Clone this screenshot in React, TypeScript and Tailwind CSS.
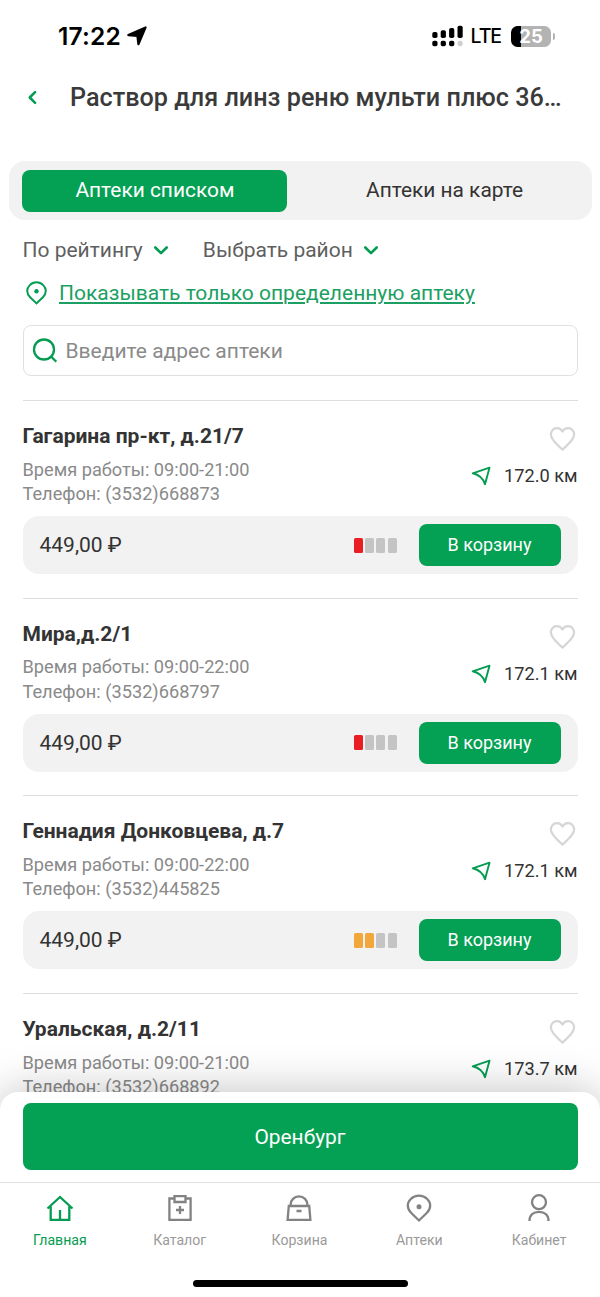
import type { ReactNode } from "react";

type Pharmacy = {
  address: string;
  hours: string;
  phone: string;
  distance: string;
  price: string;
  stock: string[];
};

const RED = "bg-[#ea1d25]";
const ORANGE = "bg-[#f2a73d]";
const EMPTY = "bg-[#c4c4c4]";

const pharmacies: Pharmacy[] = [
  { address: "Гагарина пр-кт, д.21/7", hours: "09:00-21:00", phone: "(3532)668873", distance: "172.0 км", price: "449,00 ₽", stock: [RED, EMPTY, EMPTY, EMPTY] },
  { address: "Мира,д.2/1", hours: "09:00-22:00", phone: "(3532)668797", distance: "172.1 км", price: "449,00 ₽", stock: [RED, EMPTY, EMPTY, EMPTY] },
  { address: "Геннадия Донковцева, д.7", hours: "09:00-22:00", phone: "(3532)445825", distance: "172.1 км", price: "449,00 ₽", stock: [ORANGE, ORANGE, EMPTY, EMPTY] },
  { address: "Уральская, д.2/11", hours: "09:00-21:00", phone: "(3532)668892", distance: "173.7 км", price: "449,00 ₽", stock: [RED, EMPTY, EMPTY, EMPTY] },
];

function StatusBar() {
  return (
    <div className="flex h-[72px] shrink-0 items-center pl-[58px] pr-[45px]">
      <span className="font-[Inter] text-[24.5px] font-semibold leading-none tracking-[0.2px] text-black">17:22</span>
      <svg className="ml-[6px]" width="20" height="20" viewBox="0 0 20 20">
        <path d="M18.6 1.4 11.4 18.2 10.4 9.9 1.4 9.1Z" fill="#000" stroke="#000" strokeWidth="2.2" strokeLinejoin="round" />
      </svg>
      <svg className="ml-auto" width="31" height="22" viewBox="0 0 31 22">
        <rect x="0.3" y="7" width="5.2" height="6" rx="1.8" />
        <rect x="8.7" y="5.3" width="5.2" height="7.7" rx="1.8" />
        <rect x="17.1" y="3" width="5.2" height="10" rx="1.8" />
        <rect x="25.5" y="0.7" width="5.2" height="12.3" rx="1.8" />
        <rect x="0.3" y="15.7" width="5.2" height="5.6" rx="1.8" />
        <rect x="8.7" y="15.7" width="5.2" height="5.6" rx="1.8" />
        <rect x="17.1" y="15.7" width="5.2" height="5.6" rx="1.8" />
        <rect x="25.5" y="15.7" width="5.2" height="5.6" rx="2.4" fill="#d0d0d0" />
      </svg>
      <span className="ml-[8px] mt-[2px] font-[Inter] text-[19.5px] font-medium leading-none tracking-[-1.1px] text-black">LTE</span>
      <div className="ml-[10px] flex h-[21px] w-[40px] items-center justify-center rounded-[6.5px] bg-linear-to-r from-black from-25% to-[#b3b3b3] to-25%">
        <span className="font-[Inter] text-[18.5px] font-bold leading-none text-white">25</span>
      </div>
      <div className="ml-[1.5px] h-[7px] w-[2.5px] rounded-r-full bg-[#b3b3b3]" />
    </div>
  );
}

function Chevron() {
  return (
    <svg width="16" height="12" viewBox="0 0 16 12" fill="none" stroke="#049c51" strokeWidth="2.6" strokeLinecap="round" strokeLinejoin="round">
      <path d="M2.3 3.5 8 9.2 13.7 3.5" />
    </svg>
  );
}

function PharmacyCard({ item }: { item: Pharmacy }) {
  return (
    <article className="flex h-[197.6px] shrink-0 flex-col border-t-[1.5px] border-[#dedede] pt-[22px]">
      <div className="flex h-[93.2px] justify-between">
        <div>
          <h2 className="h-[34.8px] text-[21px] font-bold leading-[26px] text-[#333]">{item.address}</h2>
          <p className="text-[18.2px] leading-[24.4px] text-[#8a8a8a]">Время работы: {item.hours}</p>
          <p className="text-[18.2px] leading-[24.4px] text-[#8a8a8a]">Телефон: {item.phone}</p>
        </div>
        <div className="flex flex-col items-end">
          <svg className="mt-[3px] mr-[2px]" width="27" height="26" viewBox="0 0 28 26" fill="none" stroke="#d6d6d6" strokeWidth="2.3" strokeLinejoin="round">
            <path d="M14 5.2C11.4.6 5.4.7 3 4.7.9 8.3 2.5 12.2 5.2 15.2 8 18.2 10.8 21.5 14 23.9 17.2 21.5 20 18.2 22.8 15.2 25.5 12.2 27.1 8.3 25 4.7 22.6.7 16.6.6 14 5.2Z" />
          </svg>
          <div className="mt-[12px] flex items-center">
            <svg width="20" height="20" viewBox="0 0 20 20" fill="none" stroke="#049c51" strokeWidth="1.9" strokeLinejoin="round">
              <path d="M18.5 1.7 1.7 7.3Q11.2 9.5 14 18.2Z" />
            </svg>
            <span className="ml-[13px] text-[18.2px] leading-6 text-[#333]">{item.distance}</span>
          </div>
        </div>
      </div>
      <div className="flex h-[58px] items-center rounded-[16px] bg-[#f2f2f2] px-[17px]">
        <span className="text-[21px] leading-6 text-[#333]">{item.price}</span>
        <div className="ml-auto flex gap-[2.5px]">
          {item.stock.map((color, i) => (
            <span key={i} className={`h-[15px] w-[8.8px] rounded-[1.5px] ${color}`} />
          ))}
        </div>
        <button className="ml-[22px] h-[42px] w-[142px] rounded-[8px] bg-[#04a053] text-[18px] leading-6 text-white">В корзину</button>
      </div>
    </article>
  );
}

function Tab({ label, active = false, children }: { label: string; active?: boolean; children: ReactNode }) {
  return (
    <div className={`flex flex-1 flex-col items-center ${active ? "text-[#049c51]" : "text-[#828282]"}`}>
      <svg width="32" height="32" viewBox="0 0 32 32" fill="none" stroke="currentColor" strokeWidth="2.3">
        {children}
      </svg>
      <span className={`mt-[6px] text-[14.1px] leading-5 ${active ? "" : "text-[#9a9a9a]"}`}>{label}</span>
    </div>
  );
}

export default function App() {
  return (
    <div className="flex h-[1297px] w-[600px] flex-col overflow-hidden bg-white font-[Roboto,sans-serif]">
      <StatusBar />
      <header className="flex h-[50px] shrink-0 items-center pl-[27px]">
        <svg width="11" height="16" viewBox="0 0 11 16" fill="none" stroke="#049c51" strokeWidth="2.5" strokeLinecap="round" strokeLinejoin="round">
          <path d="M8.1 3.2 2.7 8.5 8.1 13.8" />
        </svg>
        <h1 className="ml-[32px] whitespace-nowrap pt-px text-[25.2px] font-medium leading-8 text-[#3a3a3a]">Раствор для линз реню мульти плюс 36…</h1>
      </header>

      <div className="mx-[8.5px] mt-[39px] flex h-[59px] shrink-0 items-center rounded-[16px] bg-[#f2f2f2] px-[13.9px]">
        <div className="flex h-[42px] w-[265px] items-center justify-center rounded-[8px] bg-[#04a053] pt-px text-[20.9px] text-white">Аптеки списком</div>
        <div className="flex flex-1 items-center justify-center pt-px pl-[24px] text-[20.9px] text-[#333]">
          <span>Аптеки на карте</span>
        </div>
      </div>

      <main className="flex min-h-0 flex-1 flex-col overflow-hidden px-[22.5px]">
        <div className="mt-[15px] flex h-[30px] shrink-0 items-center text-[21px] text-[#5f5f5f]">
          <span className="mr-[10px] pt-px">По рейтингу</span>
          <Chevron />
          <span className="ml-[34px] mr-[10px] pt-px">Выбрать район</span>
          <Chevron />
        </div>
        <div className="mt-[13px] flex h-[30px] shrink-0 items-center pl-[3.5px]">
          <svg width="21" height="24" viewBox="0 0 21 24" fill="none" stroke="#049c51" strokeWidth="2">
            <path d="M10.5 22.4 4.1 16.2C.3 12.5.3 7.5 3.8 4.1A9.3 9.3 0 0 1 17.2 4.1C20.7 7.5 20.7 12.5 16.9 16.2Z" />
            <circle cx="10.5" cy="10.2" r="2.2" fill="#049c51" stroke="none" />
          </svg>
          <span className="ml-[12px] pt-[2px] text-[21px] text-[#1c9f62] underline decoration-[1.5px] underline-offset-[2px]">Показывать только определенную аптеку</span>
        </div>
        <div className="mt-[17px] flex h-[51px] shrink-0 items-center rounded-[8px] border-[1.5px] border-[#e0e0e0] pl-[8px]">
          <svg width="26" height="26" viewBox="0 0 26 26" fill="none" stroke="#049c51" strokeWidth="2.3">
            <circle cx="12" cy="11.5" r="10" />
            <path d="m19 18.5 5.3 5.3" />
          </svg>
          <span className="ml-[8px] pt-[1.5px] text-[21px] text-[#8a8a8a]">Введите адрес аптеки</span>
        </div>
        <div className="mt-[24px] flex flex-col">
          {pharmacies.map((item) => (
            <PharmacyCard key={item.address} item={item} />
          ))}
        </div>
      </main>

      <footer className="relative -mt-[16px] shrink-0">
        <div className="rounded-t-[18px] bg-white px-[22.5px] pt-[11px] pb-[12px] shadow-[0_0_46px_rgba(0,0,0,0.25)]">
          <button className="h-[67px] w-full rounded-[8px] bg-[#04a053] pt-[2px] text-[20.9px] text-white">Оренбург</button>
        </div>
        <nav className="relative flex h-[115px] flex-col border-t-[1.5px] border-[#e0e0e0] bg-white">
          <div className="flex pt-[9px] pr-[1px]">
            <Tab label="Главная" active>
              <path d="M3.5 16.5 16 5 28.5 16.5M6.7 14.5V27.8H25.3V14.5M16 18V27" />
            </Tab>
            <Tab label="Каталог">
              <path d="M10.5 6.500H5.4V27.8H26.6V6.5H21.5M10.5 4.2H21.5V10H10.5ZM16 14V22M12 18H20" />
            </Tab>
            <Tab label="Корзина">
              <path d="M5.8 14H26.2L27.4 27.8H4.6ZM7.5 14V12.9A8.500 8.500 0 0 1 24.500 12.900V14M13.500 19H18.500" />
            </Tab>
            <Tab label="Аптеки">
              <path d="M16 28.5 8.3 21C3.7 16.5 3.8 10.9 7.8 7A11.6 11.6 0 0 1 24.2 7C28.2 10.9 28.3 16.5 23.7 21Z" />
              <circle cx="16" cy="14.8" r="2.5" fill="currentColor" stroke="none" />
            </Tab>
            <Tab label="Кабинет">
              <circle cx="16" cy="10.2" r="7" />
              <path d="M6.5 29C6.5 23 10.5 19.8 16 19.8S25.5 23 25.5 29" />
            </Tab>
          </div>
          <div className="mx-auto mt-[30px] h-[6.5px] w-[215px] rounded-full bg-black" />
        </nav>
      </footer>
    </div>
  );
}
